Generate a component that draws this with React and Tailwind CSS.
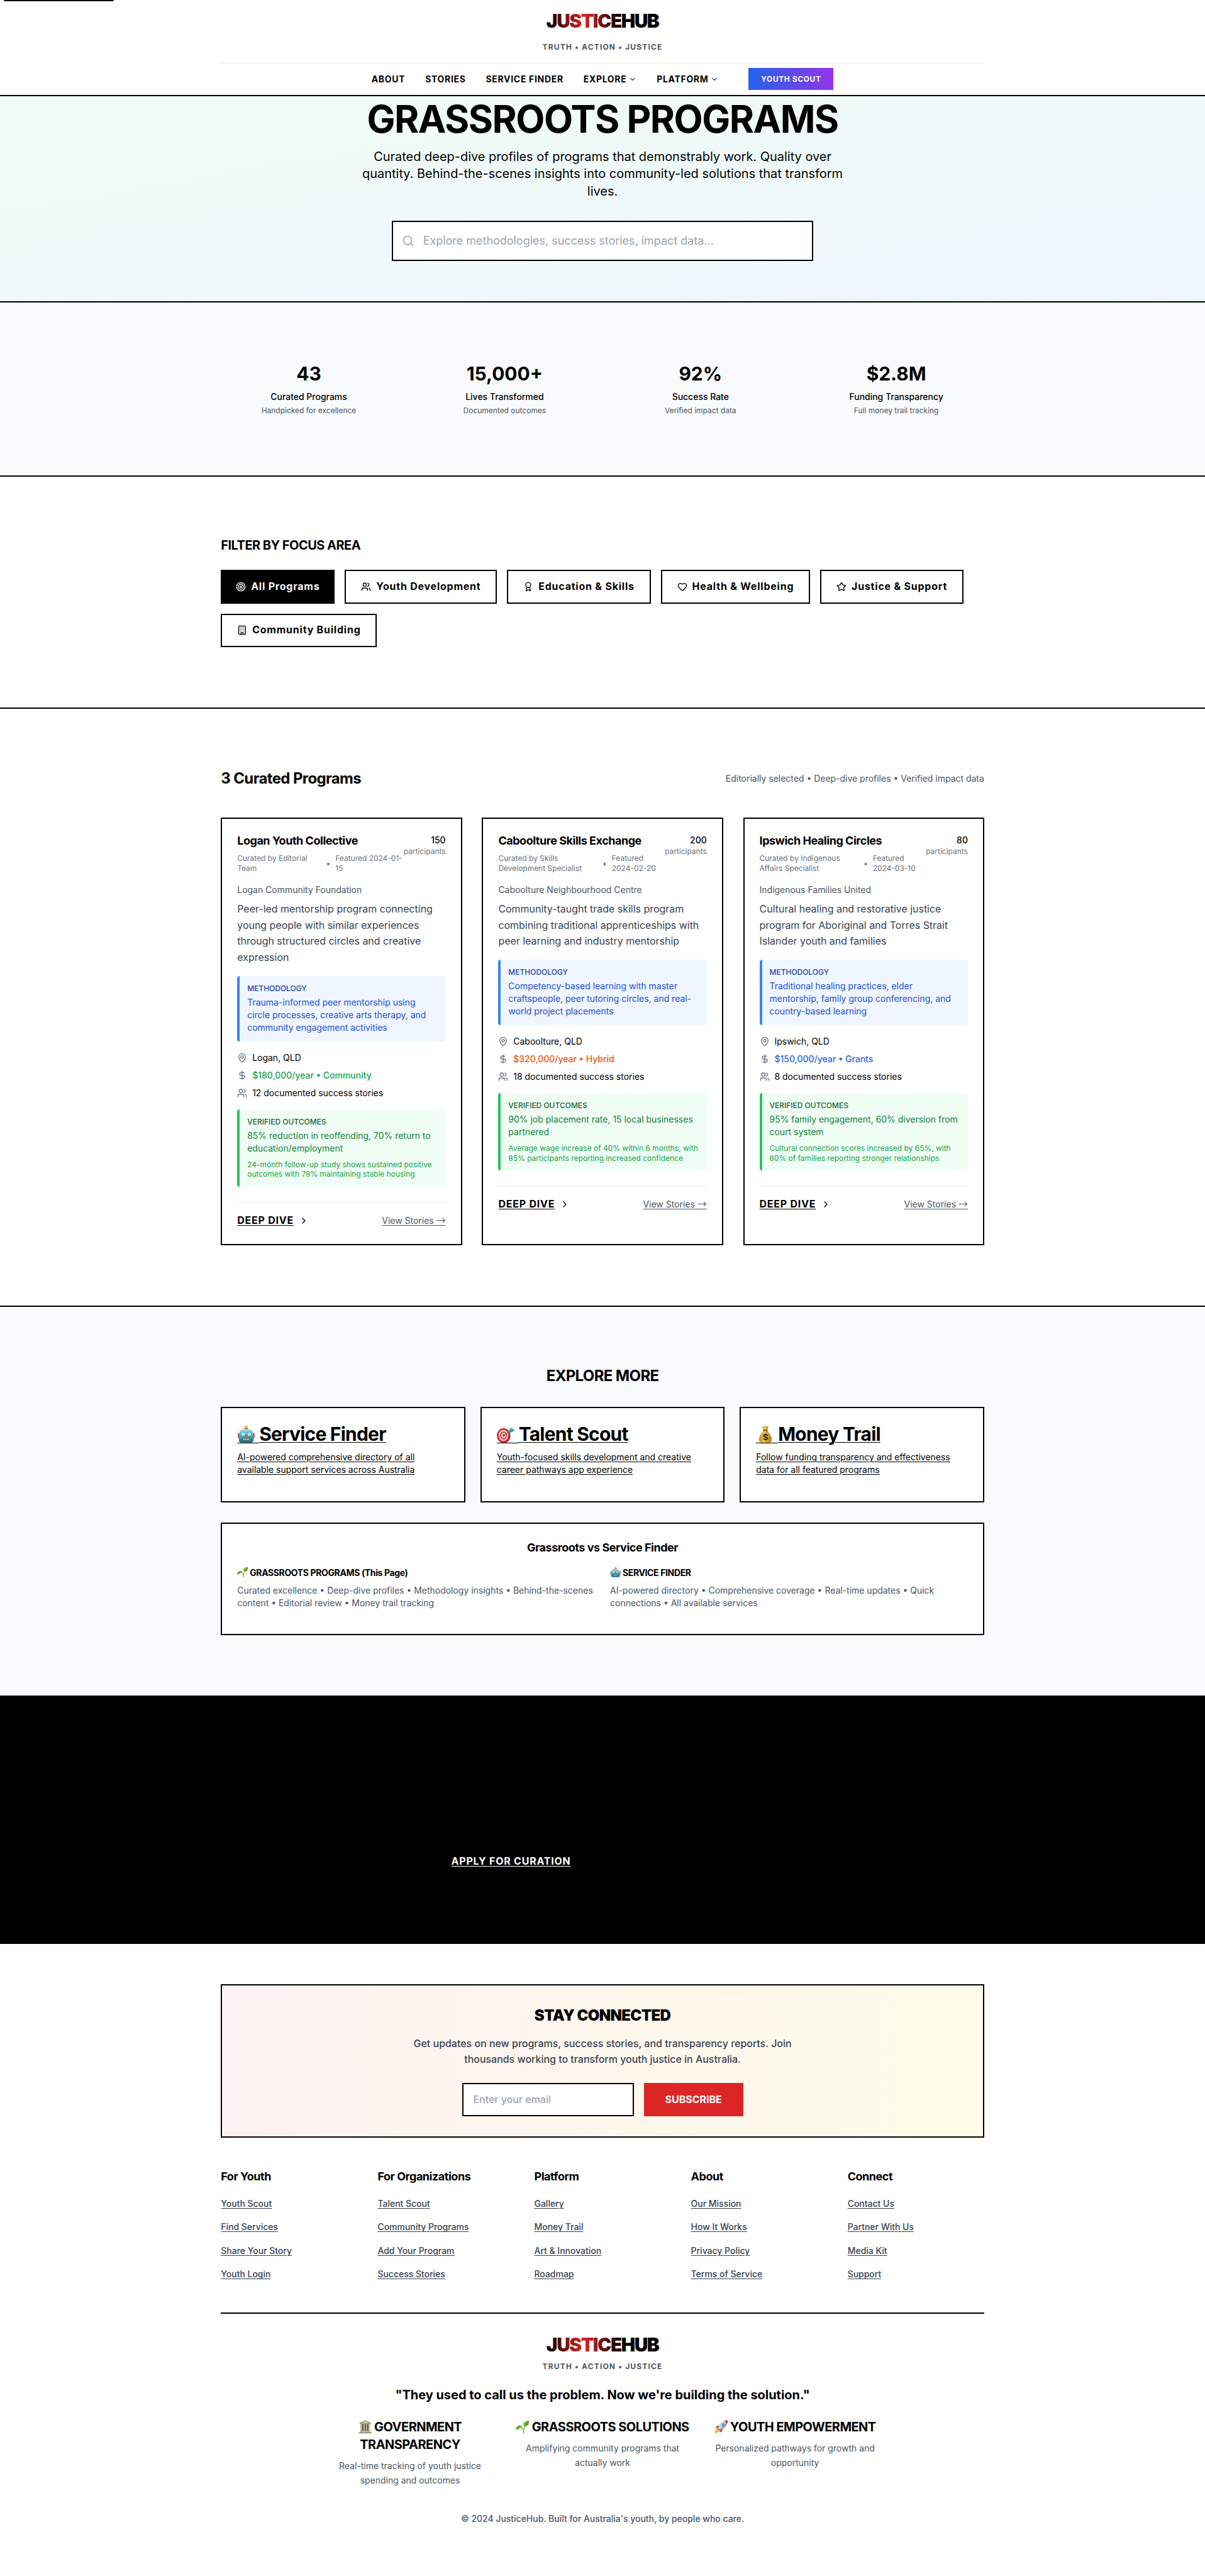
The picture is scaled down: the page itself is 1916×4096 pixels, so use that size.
import React from "react";
import {
  Search, Target, Users, Award, Heart, Star, Building, MapPin, DollarSign, ChevronRight, ChevronDown,
} from "lucide-react";

function Robot(props) {
  return (
    <svg viewBox="0 0 32 32" {...props}>
      <defs>
        <linearGradient id="robotHead" x1="0" y1="0" x2="0" y2="1">
          <stop offset="0" stopColor="#a3dbe2" />
          <stop offset="0.45" stopColor="#5fb0bd" />
          <stop offset="1" stopColor="#16697c" />
        </linearGradient>
      </defs>
      <rect x="1.2" y="14" width="4" height="9" rx="1.6" fill="#c8524f" />
      <rect x="26.8" y="14" width="4" height="9" rx="1.6" fill="#c8524f" />
      <rect x="13" y="4" width="6" height="5" rx="1" fill="#b5463f" />
      <path d="M13.2 5.5V3a2.8 2.8 0 0 1 5.6 0v2.5z" fill="#fbb52c" />
      <path d="M7 8.5Q16 5.5 25 8.5Q28 10 28 14L29 26Q29 30.5 24.5 30.7H7.5Q3 30.5 3 26L4 14Q4 10 7 8.5Z" fill="url(#robotHead)" />
      <circle cx="10.5" cy="15.8" r="4" fill="#2b8fa3" />
      <circle cx="21.5" cy="15.8" r="4" fill="#2b8fa3" />
      <circle cx="10.5" cy="15.8" r="3.1" fill="#d9fbff" />
      <circle cx="21.5" cy="15.8" r="3.1" fill="#d9fbff" />
      <circle cx="10.5" cy="15.8" r="1.3" fill="#5cc9dc" />
      <circle cx="21.5" cy="15.8" r="1.3" fill="#5cc9dc" />
      <path d="M16 16.5L18.4 21H13.6Z" fill="#e0413a" />
      <rect x="9.5" y="23" width="13" height="4.2" rx="1.2" fill="#33444b" />
      <path d="M11 23.6h1.8v3H11zM14 23.6h1.6v3H14zM16.8 23.6h1.6v3h-1.6zM19.6 23.6h1.6v3h-1.6z" fill="#f2f5f5" />
    </svg>
  );
}

function Dart(props) {
  return (
    <svg viewBox="0 0 32 32" {...props}>
      <ellipse cx="12.2" cy="18.8" rx="11.6" ry="12.8" fill="#a3141c" />
      <ellipse cx="11.4" cy="18.2" rx="11.2" ry="12.6" fill="#d9252c" />
      <ellipse cx="11.6" cy="18.2" rx="8.4" ry="9.6" fill="#f7f1f0" />
      <ellipse cx="11.8" cy="18.2" rx="6.2" ry="7.2" fill="#d9252c" />
      <ellipse cx="12" cy="18.2" rx="4" ry="4.8" fill="#f7f1f0" />
      <ellipse cx="12.2" cy="18.2" rx="2.1" ry="2.6" fill="#d9252c" />
      <path d="M12.4 18.2L24 10.2" stroke="#46707c" strokeWidth="1.4" />
      <path d="M20.5 12.8L21 7.6L27.6 3.4L27.4 7.4L31.6 8.2L26 12.8Z" fill="#4fb9cc" />
      <path d="M20.5 12.8L27.4 7.4L31.6 8.2L26 12.8Z" fill="#2f94a8" />
    </svg>
  );
}

function MoneyBag(props) {
  return (
    <svg viewBox="0 0 32 32" {...props}>
      <defs>
        <linearGradient id="bagGold" x1="0" y1="0" x2="1" y2="0">
          <stop offset="0" stopColor="#b98a1f" />
          <stop offset="0.4" stopColor="#edc954" />
          <stop offset="1" stopColor="#a97816" />
        </linearGradient>
      </defs>
      <path d="M11 1.5L14 2.6L16.5 1L19 2.6L22 1.5L19.6 9H13.4Z" fill="url(#bagGold)" />
      <path d="M13 9.5H20Q22 12.5 25 17Q29 24 27 28.5Q25.8 31 21 31H12Q7.2 31 6 28.5Q4 24 8 17Q11 12.5 13 9.5Z" fill="url(#bagGold)" />
      <rect x="12" y="8" width="9" height="2.4" rx="1.2" fill="#8a5a1a" />
      <text x="16.5" y="26.6" textAnchor="middle" fontSize="15" fontWeight="700" fill="#3c3214">$</text>
    </svg>
  );
}

function Seedling(props) {
  return (
    <svg viewBox="0 0 32 32" {...props}>
      <path d="M12.5 17Q18.5 19.5 19 31.5" fill="none" stroke="#6fae2c" strokeWidth="2" strokeLinecap="round" />
      <path d="M19 31Q18.6 21 21.5 13" fill="none" stroke="#7dbb35" strokeWidth="2" />
      <path d="M0.5 23Q1 13 10 12.6Q14.5 12.8 15 18Q10 17.6 7.5 20.5Q4.5 24 0.5 23Z" fill="#62ab24" />
      <path d="M20.2 15.5Q16 9.5 20.5 5Q24.5 1.2 31 1Q32.5 8 28.5 12Q25 15.6 20.2 15.5Z" fill="#74c22e" />
      <path d="M20.8 14.5Q24 7 30.5 1.6Q32 8 28.4 11.8Q25 15 20.8 14.5Z" fill="#549c1f" />
    </svg>
  );
}

function Temple(props) {
  return (
    <svg viewBox="0 0 32 32" {...props}>
      <path d="M16 0.5L29.5 6.5V9.5H2.5V6.5Z" fill="#a69e7c" />
      <path d="M16 2.8L24.5 7H7.5Z" fill="#d8d1b4" />
      <rect x="5" y="9.5" width="22" height="17" fill="#4b4535" />
      <path d="M5 9.5h3.6v17H5zM11.6 9.5h3v17h-3zM17.4 9.5h3v17h-3zM23.4 9.5H27v17h-3.6z" fill="#cdc5a5" />
      <rect x="3.4" y="26" width="25.2" height="2.6" fill="#c4bb98" />
      <rect x="1" y="28.6" width="30" height="3" fill="#9a9170" />
    </svg>
  );
}

function Rocket(props) {
  return (
    <svg viewBox="0 0 32 32" {...props}>
      <path d="M9 19Q1.5 21 0.8 31.2Q10 30 13 23.5Z" fill="#f9a01e" />
      <path d="M8.6 22Q4.6 23.6 4 28.2Q8.8 27.4 10.6 24Z" fill="#fde35a" />
      <path d="M11.5 12.5Q5 12.5 2.8 19.5L9.4 19.2Z" fill="#d3302f" />
      <path d="M19.5 21Q19.5 27.5 12.5 29.6L13 23Z" fill="#d3302f" />
      <path d="M8.5 20.5Q10 9 22 2.6Q27 0.4 31.4 0.8Q31.8 5.2 29.5 10Q23 22 12 24Z" fill="#c9d3dc" />
      <path d="M10 22.2Q20 19 31.2 1.2Q31.8 5.2 29.5 10Q23 22 12 24Z" fill="#8d9cab" />
      <path d="M23.4 2Q27 0.4 31.4 0.8Q31.8 5.2 30.2 8.6Z" fill="#d3302f" />
      <circle cx="20.6" cy="11.2" r="3.2" fill="#3e6f9e" />
      <circle cx="20.3" cy="10.9" r="1.8" fill="#8fc4ea" />
      <path d="M8.5 20.5L12 24L10.6 25L7.4 21.8Z" fill="#3d5a85" />
    </svg>
  );
}

function Logo() {
  return (
    <div className="text-[30px] leading-9 font-black tracking-[-0.05em]">
      <span className="bg-linear-to-r/srgb from-black via-[#dc2626] to-black bg-clip-text text-transparent">JUSTICE</span>
      <span className="text-black">HUB</span>
    </div>
  );
}

function Tagline() {
  return (
    <div className="text-xs font-bold tracking-[0.1em] text-[#4b5563]">TRUTH • ACTION • JUSTICE</div>
  );
}

function Header() {
  return (
    <header className="h-[153px] border-b-[2.01px] border-black bg-white">
      <div className="mx-auto flex w-[1216px] flex-col">
        <div className="flex h-[101px] flex-col items-center gap-[15.5px] border-b-[1.01px] border-[#e5e7eb] pt-4">
          <Logo />
          <Tagline />
        </div>
        <nav className="flex h-[50px] items-center justify-center gap-8 text-sm font-bold tracking-[0.05em]">
          <a>ABOUT</a>
          <a>STORIES</a>
          <a>SERVICE FINDER</a>
          <a className="flex items-center gap-1">EXPLORE <ChevronDown className="size-3 text-[#374151]" strokeWidth={2.5} /></a>
          <a className="flex items-center gap-1">PLATFORM <ChevronDown className="size-3 text-[#374151]" strokeWidth={2.5} /></a>
          <a className="ml-4 flex h-[35px] items-center bg-linear-to-r/srgb from-[#2563eb] to-[#9333ea] px-5 text-xs tracking-[0.05em] text-white">YOUTH SCOUT</a>
        </nav>
      </div>
    </header>
  );
}

function Hero() {
  return (
    <section className="h-[329px] border-b-[2.01px] border-black bg-linear-to-br/srgb from-[#f0fdf4] to-[#eff6ff] text-center">
      <h1 className="pt-[1px] text-[60px] leading-[72px] font-bold tracking-[-0.025em]">GRASSROOTS PROGRAMS</h1>
      <p className="mx-auto mt-[10px] w-[768px] text-xl leading-7">
        Curated deep-dive profiles of programs that demonstrably work. Quality over quantity. Behind-the-scenes insights into community-led solutions that transform lives.
      </p>
      <div className="mx-auto mt-8 flex h-16 w-[672px] items-center gap-3.5 border-[2.01px] border-black bg-white pl-3.5 text-lg text-[#9ca3af]">
        <Search className="size-5" />
        <span>Explore methodologies, success stories, impact data...</span>
      </div>
    </section>
  );
}

const stats = [
  ["43", "Curated Programs", "Handpicked for excellence"],
  ["15,000+", "Lives Transformed", "Documented outcomes"],
  ["92%", "Success Rate", "Verified impact data"],
  ["$2.8M", "Funding Transparency", "Full money trail tracking"],
];

function Stats() {
  return (
    <section className="border-b-[2.01px] border-black bg-[#f9fafb] py-24">
      <div className="mx-auto grid w-[1216px] grid-cols-4 gap-8 text-center">
        {stats.map(([n, l, s]) => (
          <div key={l}>
            <div className="text-3xl leading-9 font-bold">{n}</div>
            <div className="mt-2 text-sm font-medium">{l}</div>
            <div className="mt-1 text-xs text-[#4b5563]">{s}</div>
          </div>
        ))}
      </div>
    </section>
  );
}

const filters = [
  [Users, "Youth Development"],
  [Award, "Education & Skills"],
  [Heart, "Health & Wellbeing"],
  [Star, "Justice & Support"],
  [Building, "Community Building"],
];

function Filters() {
  return (
    <section className="border-b-[2.01px] border-black py-24">
      <div className="mx-auto w-[1216px]">
        <h3 className="text-xl leading-7 font-bold tracking-[-0.025em]">FILTER BY FOCUS AREA</h3>
        <div className="mt-6 flex flex-wrap gap-4 font-bold tracking-[0.05em]">
          <button className="flex items-center gap-2 bg-black px-6 text-white"><Target className="size-4" />All Programs</button>
          {filters.map(([Icon, label]) => (
            <button key={label} className="flex items-center gap-2 border-[2.01px] border-black px-6 py-3 leading-[25.6px]">
              <Icon className="size-4" />{label}
            </button>
          ))}
        </div>
      </div>
    </section>
  );
}

const programs = [
  {
    name: "Logan Youth Collective", count: "150", curator: "Curated by Editorial Team", date: "Featured 2024-01-15",
    org: "Logan Community Foundation",
    text: "Peer-led mentorship program connecting young people with similar experiences through structured circles and creative expression",
    method: "Trauma-informed peer mentorship using circle processes, creative arts therapy, and community engagement activities",
    place: "Logan, QLD", money: "$180,000/year • Community", moneyColor: "text-[#16a34a]", stories: "12 documented success stories",
    outcome: "85% reduction in reoffending, 70% return to education/employment",
    detail: "24-month follow-up study shows sustained positive outcomes with 78% maintaining stable housing",
  },
  {
    name: "Caboolture Skills Exchange", count: "200", curator: "Curated by Skills Development Specialist", date: "Featured 2024-02-20",
    org: "Caboolture Neighbourhood Centre",
    text: "Community-taught trade skills program combining traditional apprenticeships with peer learning and industry mentorship",
    method: "Competency-based learning with master craftspeople, peer tutoring circles, and real-world project placements",
    place: "Caboolture, QLD", money: "$320,000/year • Hybrid", moneyColor: "text-[#ea580c]", stories: "18 documented success stories",
    outcome: "90% job placement rate, 15 local businesses partnered",
    detail: "Average wage increase of 40% within 6 months, with 85% participants reporting increased confidence",
  },
  {
    name: "Ipswich Healing Circles", count: "80", curator: "Curated by Indigenous Affairs Specialist", date: "Featured 2024-03-10",
    org: "Indigenous Families United",
    text: "Cultural healing and restorative justice program for Aboriginal and Torres Strait Islander youth and families",
    method: "Traditional healing practices, elder mentorship, family group conferencing, and country-based learning",
    place: "Ipswich, QLD", money: "$150,000/year • Grants", moneyColor: "text-[#2563eb]", stories: "8 documented success stories",
    outcome: "95% family engagement, 60% diversion from court system",
    detail: "Cultural connection scores increased by 65%, with 80% of families reporting stronger relationships",
  },
];

function ProgramCard({ p }) {
  return (
    <article className="border-[2.01px] border-black bg-white p-6">
      <div className="flex items-start justify-between">
        <div className="flex-1">
          <h3 className="text-lg leading-[22.5px] font-bold tracking-[-0.025em]">{p.name}</h3>
          <div className="mt-2 flex items-center gap-2 text-xs text-[#6b7280]">
            <span>{p.curator}</span>
            <span>•</span>
            <span>{p.date}</span>
          </div>
        </div>
        <div className="text-right">
          <div className="text-sm font-medium">{p.count}</div>
          <div className="text-xs text-[#6b7280]">participants</div>
        </div>
      </div>
      <p className="mt-4 text-sm text-[#4b5563]">{p.org}</p>
      <p className="mt-2 leading-[26px] text-[#374151]">{p.text}</p>
      <div className="mt-4 rounded border-l-[4.02px] border-[#3b82f6] bg-[#eff6ff] p-3">
        <div className="text-xs font-medium text-[#1e40af]">METHODOLOGY</div>
        <p className="mt-1 text-sm text-[#1d4ed8]">{p.method}</p>
      </div>
      <div className="mt-4 flex flex-col gap-2 text-sm">
        <div className="flex items-center gap-2"><MapPin className="size-4 text-[#6b7280]" />{p.place}</div>
        <div className="flex items-center gap-2">
          <DollarSign className="size-4 text-[#6b7280]" />
          <span className={`font-medium ${p.moneyColor}`}>{p.money}</span>
        </div>
        <div className="flex items-center gap-2"><Users className="size-4 text-[#6b7280]" />{p.stories}</div>
      </div>
      <div className="mt-4 rounded border-l-[4.02px] border-[#22c55e] bg-[#f0fdf4] p-3">
        <div className="text-xs font-medium text-[#166534]">VERIFIED OUTCOMES</div>
        <p className="mt-1 text-sm text-[#15803d]">{p.outcome}</p>
        <p className="mt-2 text-xs text-[#16a34a]">{p.detail}</p>
      </div>
      <div className="mt-6 flex h-[42.6px] items-center justify-between border-t-[1.01px] border-[#e5e7eb] pt-4 leading-[25.6px]">
        <span className="flex items-center gap-2 font-bold tracking-[0.05em]">
          <a className="underline decoration-[1.01px] underline-offset-2">DEEP DIVE</a>
          <ChevronRight className="size-4" />
        </span>
        <a className="text-sm text-[#4b5563] underline decoration-[1.01px] underline-offset-2">View Stories <span className="font-['Noto_Sans_CJK_JP'] text-[15px] leading-none">→</span></a>
      </div>
    </article>
  );
}

function Programs() {
  return (
    <section className="border-b-[2.01px] border-black py-24">
      <div className="mx-auto w-[1216px]">
        <div className="flex h-[30px] items-center justify-between">
          <h2 className="text-2xl font-bold tracking-[-0.025em]">3 Curated Programs</h2>
          <p className="text-sm text-[#4b5563]">Editorially selected • Deep-dive profiles • Verified impact data</p>
        </div>
        <div className="mt-12 grid grid-cols-3 gap-8">
          {programs.map((p) => <ProgramCard key={p.name} p={p} />)}
        </div>
      </div>
    </section>
  );
}

const explore = [
  [Robot, "Service Finder", "AI-powered comprehensive directory of all available support services across Australia"],
  [Dart, "Talent Scout", "Youth-focused skills development and creative career pathways app experience"],
  [MoneyBag, "Money Trail", "Follow funding transparency and effectiveness data for all featured programs"],
];

const compare = [
  [Seedling, "GRASSROOTS PROGRAMS (This Page)", "Curated excellence • Deep-dive profiles • Methodology insights • Behind-the-scenes content • Editorial review • Money trail tracking"],
  [Robot, "SERVICE FINDER", "AI-powered directory • Comprehensive coverage • Real-time updates • Quick connections • All available services"],
];

function Explore() {
  return (
    <section className="bg-[#f9fafb] py-24">
      <div className="mx-auto w-[1216px]">
        <h2 className="text-center text-2xl leading-[30px] font-bold tracking-[-0.025em]">EXPLORE MORE</h2>
        <div className="mt-[34px] grid grid-cols-3 gap-6">
          {explore.map(([Icon, t, d]) => (
            <a key={t} className="border-[2.01px] border-black bg-white p-6 pb-10">
              <div className="flex h-9 text-3xl leading-9 font-bold tracking-[-0.025em]">
                <span className="mt-[30.5px] h-[1.01px] w-[35px] bg-black">
                  <Icon className="mt-[-28px] size-[29px]" />
                </span>
                <span className="underline decoration-[1.01px] underline-offset-2">{t}</span>
              </div>
              <p className="mt-2 text-sm underline decoration-[1.01px] underline-offset-2">{d}</p>
            </a>
          ))}
        </div>
        <div className="mt-8 border-[2.01px] border-black bg-white p-6 pb-10">
          <h3 className="text-center text-lg leading-7 font-bold tracking-[-0.025em]">Grassroots vs Service Finder</h3>
          <div className="mt-4 grid grid-cols-2 gap-6">
            {compare.map(([Icon, t, d]) => (
              <div key={t}>
                <h4 className="flex gap-[2.5px] text-sm leading-5 font-bold tracking-[-0.025em]">
                  <Icon className="size-[17.5px]" />{t}
                </h4>
                <p className="mt-2 text-sm text-[#4b5563]">{d}</p>
              </div>
            ))}
          </div>
        </div>
      </div>
    </section>
  );
}

function Apply() {
  return (
    <section className="h-[395.6px] bg-black pt-[251.4px] pl-[719px]">
      <a className="leading-[25.6px] font-bold tracking-[0.05em] text-white underline decoration-[1.01px] underline-offset-2">APPLY FOR CURATION</a>
    </section>
  );
}

const columns = [
  ["For Youth", ["Youth Scout", "Find Services", "Share Your Story", "Youth Login"]],
  ["For Organizations", ["Talent Scout", "Community Programs", "Add Your Program", "Success Stories"]],
  ["Platform", ["Gallery", "Money Trail", "Art & Innovation", "Roadmap"]],
  ["About", ["Our Mission", "How It Works", "Privacy Policy", "Terms of Service"]],
  ["Connect", ["Contact Us", "Partner With Us", "Media Kit", "Support"]],
];

const pillars = [
  [Temple, "GOVERNMENT TRANSPARENCY", "Real-time tracking of youth justice spending and outcomes"],
  [Seedling, "GRASSROOTS SOLUTIONS", "Amplifying community programs that actually work"],
  [Rocket, "YOUTH EMPOWERMENT", "Personalized pathways for growth and opportunity"],
];

function Footer() {
  return (
    <footer className="mx-auto w-[1216px] pt-16">
      <div className="border-[2.01px] border-black bg-linear-to-r/srgb from-[#fef2f2] to-[#fefce8] p-8 text-center">
        <h2 className="text-2xl font-black tracking-[-0.025em]">STAY CONNECTED</h2>
        <p className="mx-auto mt-4 w-[672px] leading-[25.6px] font-medium text-[#374151]">
          Get updates on new programs, success stories, and transparency reports. Join thousands working to transform youth justice in Australia.
        </p>
        <div className="mx-auto mt-6 flex w-[448px] gap-4 leading-[25.6px]">
          <div className="flex-1 border-[2.01px] border-black bg-white px-4 py-3 text-left font-medium text-[#9ca3af]">Enter your email</div>
          <button className="bg-[#dc2626] px-[34px] py-[14px] font-bold text-white">SUBSCRIBE</button>
        </div>
      </div>
      <div className="mt-12 grid grid-cols-5 gap-8">
        {columns.map(([title, links]) => (
          <div key={title}>
            <h3 className="text-lg leading-7 font-bold tracking-[-0.025em]">{title}</h3>
            <ul className="mt-4 flex flex-col gap-3 leading-[25.6px]">
              {links.map((l) => (
                <li key={l} className="h-[25.6px]"><a className="text-sm font-medium text-[#374151] underline decoration-[1.01px] underline-offset-2">{l}</a></li>
              ))}
            </ul>
          </div>
        ))}
      </div>
      <div className="mt-12 flex flex-col items-center border-t-[2.01px] border-black pt-8 text-center">
        <Logo />
        <div className="mt-2"><Tagline /></div>
        <p className="mt-6 text-xl leading-7 font-bold">"They used to call us the problem. Now we're building the solution."</p>
        <div className="mt-6 grid w-[896px] grid-cols-3 gap-6">
          {pillars.map(([Icon, t, d]) => (
            <div key={t}>
              <h4 className="text-xl leading-7 font-bold tracking-[-0.025em]">
                <Icon className="mr-[-0.5px] inline size-[21.5px] align-[-3.5px]" /> {t}
              </h4>
              <p className="mt-2 text-sm leading-[22.4px] text-[#4b5563]">{d}</p>
            </div>
          ))}
        </div>
        <p className="mt-[39.6px] text-sm leading-[22.4px] font-medium text-[#4b5563]">© 2024 JusticeHub. Built for Australia's youth, by people who care.</p>
      </div>
    </footer>
  );
}

export default function App() {
  return (
    <div className="relative h-[4104px] w-[1920px] overflow-hidden bg-white font-['Inter',sans-serif] text-base text-black [zoom:0.998]">
      <div className="absolute top-0 left-[6px] h-[2px] w-[175px] rounded-b-sm bg-black" />
      <Header />
      <Hero />
      <Stats />
      <Filters />
      <Programs />
      <Explore />
      <Apply />
      <Footer />
    </div>
  );
}
